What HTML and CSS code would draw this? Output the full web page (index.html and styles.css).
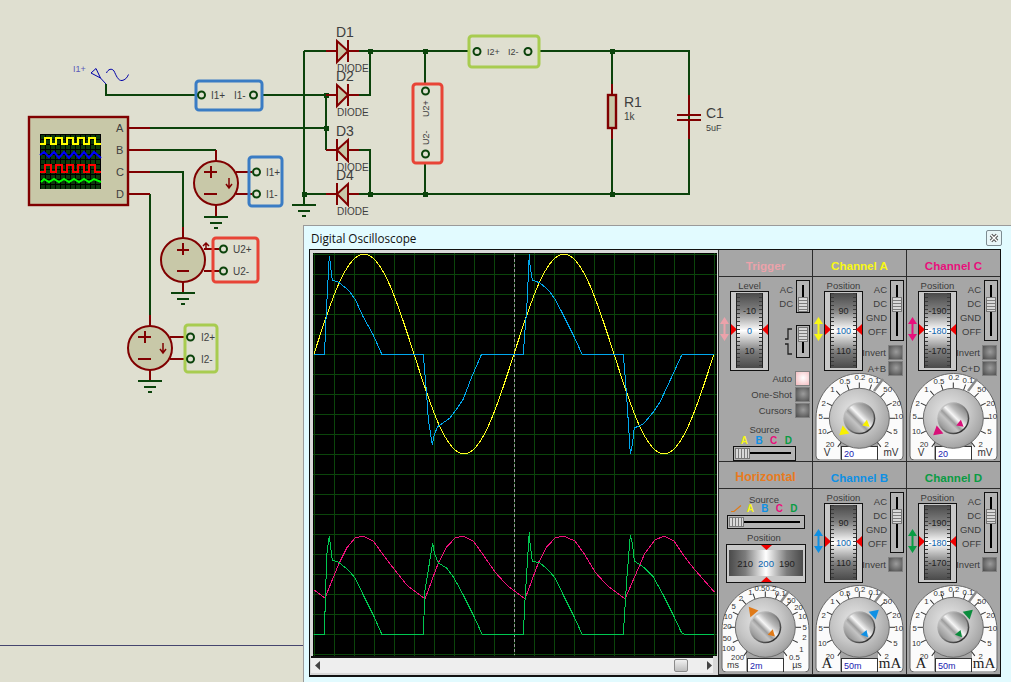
FILE: index.html
```html
<!DOCTYPE html>
<html lang="en">
<head>
<meta charset="utf-8">
<title>Digital Oscilloscope</title>
<link rel="stylesheet" href="styles.css">
</head>
<body>
<svg class="defs" width="0" height="0" aria-hidden="true">
  <defs>
    <radialGradient id="knob" cx="0.42" cy="0.4" r="0.72">
      <stop offset="0" stop-color="#e8e8e8"/><stop offset="0.5" stop-color="#c6c6c6"/><stop offset="0.8" stop-color="#a8a8a8"/><stop offset="1" stop-color="#7c7c7c"/>
    </radialGradient>
    <linearGradient id="ring" x1="0.15" y1="0.15" x2="0.85" y2="0.85">
      <stop offset="0" stop-color="#c8c8c8"/><stop offset="0.5" stop-color="#808080"/><stop offset="1" stop-color="#2e2e2e"/>
    </linearGradient>
    <linearGradient id="face" x1="0.1" y1="0.9" x2="0.9" y2="0.1">
      <stop offset="0" stop-color="#8c8c8c"/><stop offset="0.32" stop-color="#c4c4c4"/><stop offset="0.42" stop-color="#9c9c9c"/><stop offset="0.56" stop-color="#f6f6f6"/><stop offset="0.72" stop-color="#bcbcbc"/><stop offset="1" stop-color="#808080"/>
    </linearGradient>
    <pattern id="scopegrid" x="40" y="134" width="5" height="5" patternUnits="userSpaceOnUse">
      <rect width="5" height="5" fill="#0c3a0c"/><rect width="1" height="5" fill="#000"/><rect width="5" height="1" fill="#000"/>
    </pattern>
    <pattern id="screengrid" x="314" y="254" width="20" height="20" patternUnits="userSpaceOnUse">
      <rect width="1" height="20" fill="#0b450b"/><rect width="20" height="1" fill="#0b450b"/>
    </pattern>
    <symbol id="dbl-arrow" viewBox="0 0 9 24"><path d="M4.500 0L9 7H5.500V17H9L4.500 24L0 17H3.500V7H0Z"/></symbol>
    <symbol id="dial-arch" viewBox="0 0 90 88">
      <path class="arch" d="M1 84V46C1 22 20 1.500 44.500 1.500S88 22 88 46V84Q88 88 84 88H5Q1 88 1 84Z"/>
      <rect class="arch-gap" x="25" y="66" width="38" height="23"/>
      <path class="arch-split" d="M59 19L68 7"/>
      <rect class="field" x="26.500" y="74.500" width="36" height="13.500"/>
    </symbol>
    <symbol id="dial-knob" viewBox="0 0 90 88">
      <g class="ticks">
        <path d="M44.300 10.500v6"/>
        <path d="M44.300 10.500v6" transform="rotate(-20 44.300 46.300)"/>
        <path d="M44.300 10.500v6" transform="rotate(-40 44.300 46.300)"/>
        <path d="M44.300 10.500v6" transform="rotate(-65 44.300 46.300)"/>
        <path d="M44.300 10.500v6" transform="rotate(-90 44.300 46.300)"/>
        <path d="M44.300 10.500v6" transform="rotate(-115 44.300 46.300)"/>
        <path d="M44.300 10.500v6" transform="rotate(-143 44.300 46.300)"/>
        <path d="M44.300 10.500v6" transform="rotate(20 44.300 46.300)"/>
        <path d="M44.300 10.500v6" transform="rotate(45 44.300 46.300)"/>
        <path d="M44.300 10.500v6" transform="rotate(65 44.300 46.300)"/>
        <path d="M44.300 10.500v6" transform="rotate(90 44.300 46.300)"/>
        <path d="M44.300 10.500v6" transform="rotate(115 44.300 46.300)"/>
        <path d="M44.300 10.500v6" transform="rotate(143 44.300 46.300)"/>
      </g>
      <circle class="knob-rim" cx="44.300" cy="46.300" r="30"/>
      <circle class="knob-ring" cx="44.300" cy="46.300" r="16"/>
      <circle class="knob-face" cx="44.300" cy="46.300" r="14.500"/>
    </symbol>
    <symbol id="scale-ch" viewBox="0 0 90 88">
      <g class="scale">
        <text x="30" y="11.500">0.5</text><text x="45" y="8">0.2</text><text x="59" y="11">0.1</text>
        <text x="17.300" y="20">1</text><text x="8.700" y="33.500">2</text><text x="5.700" y="47">5</text><text x="7.300" y="62">10</text><text x="15" y="74.500">20</text>
        <text x="72.700" y="20">50</text><text x="81.700" y="33.500">20</text><text x="83.700" y="47">10</text><text x="80.300" y="62">5</text><text x="71.700" y="74.500">2</text>
      </g>
    </symbol>
    <symbol id="ground" viewBox="0 0 24 14" overflow="visible"><path class="gnd" d="M0 1H24M6 6.500H18M10 12H14"/></symbol>
  </defs>
</svg>

<svg class="schematic" width="1011" height="682" viewBox="0 0 1011 682">
  <path class="sheet-line" d="M0 645.500H304"/>

  <!-- wires -->
  <path class="wire" d="M106 84V95H195M262 95H326M326 95V150M128 128H326M150 150H216M150 172H183V227M150 194V315"/>
  <path class="wire" d="M304 51V204M304 51H326M304 194H326M359 51H468M370 51V95H359M359 150H370V194M359 194H689V51H539M425 51V84M425 163V194M612 51V84M612 139V194M689 51V95M689 139V194"/>
  <path class="lead" d="M128 128H150M128 150H150M128 172H150M128 194H150M216 150V161M183 227V238M150 315V326M216 205V216M183 282V292M150 370V381"/>
  <path class="lead" d="M236 172H252M236 194H252M204 249H219M204 271H219M170 337H186M170 359H186"/>
  <g class="junctions">
    <rect x="368" y="49" width="5" height="5"/><rect x="423" y="49" width="5" height="5"/><rect x="610" y="49" width="5" height="5"/>
    <rect x="324" y="93" width="5" height="5"/><rect x="324" y="126" width="5" height="5"/><rect x="302" y="192" width="5" height="5"/>
    <rect x="368" y="192" width="5" height="5"/><rect x="423" y="192" width="5" height="5"/><rect x="610" y="192" width="5" height="5"/>
  </g>

  <!-- ground symbols -->
  <use href="#ground" x="292" y="204" width="24" height="14"/>
  <use href="#ground" x="204" y="216" width="24" height="14"/>
  <use href="#ground" x="171" y="292" width="24" height="14"/>
  <use href="#ground" x="138" y="380" width="24" height="14"/>

  <!-- diodes -->
  <g class="diode"><path class="lead" d="M326 51H337M348 51H359M326 95H337M348 95H359M326 150H337M348 150H359M326 194H337M348 194H359"/>
    <path class="comp" d="M337 41L348 51L337 62ZM337 85L348 95L337 106ZM348 140L337 150L348 161ZM348 184L337 194L348 205Z"/>
    <path class="lead" d="M348 40V62M348 84V106M337 139V161M337 183V205"/>
  </g>
  <g class="lbl">
    <text class="t14" x="336" y="37">D1</text><text class="t10" x="337" y="72">DIODE</text>
    <text class="t14" x="336" y="81">D2</text><text class="t10" x="337" y="116">DIODE</text>
    <text class="t14" x="336" y="136">D3</text><text class="t10" x="337" y="171">DIODE</text>
    <text class="t14" x="336" y="180">D4</text><text class="t10" x="337" y="215">DIODE</text>
  </g>

  <!-- R1, C1 -->
  <path class="lead" d="M612 84V95M612 128V139M689 95V114M689 120V139"/>
  <rect class="comp-box" x="608" y="95" width="8" height="33"/>
  <path class="plate" d="M677 114.500H701M677 119.500H701"/>
  <g class="lbl">
    <text class="t14" x="624" y="107">R1</text><text class="t10" x="624" y="120">1k</text>
    <text class="t14" x="706" y="118">C1</text><text class="t9" x="706" y="131">5uF</text>
  </g>

  <!-- AC source probe -->
  <text class="probe-label" x="73" y="72">I1+</text>
  <path class="probe" d="M100.500 78L106 84M100.500 78L91 73L96 68.500ZM106.500 73C108 69 112 68 114 71C116 75 118 81 122 80.500C125 80 127 78 128.500 74.500"/>

  <!-- meter boxes -->
  <rect class="box blue" x="196" y="81" width="66" height="29" rx="3"/>
  <circle class="node" cx="201.500" cy="95" r="3.500"/><circle class="node" cx="253.500" cy="95" r="3.500"/>
  <g class="lbl t10"><text x="211" y="99">I1+</text><text x="234" y="99">I1-</text></g>

  <rect class="box lime" x="469" y="36" width="70" height="31" rx="3"/>
  <circle class="node" cx="477" cy="51.500" r="3.500"/><circle class="node" cx="528" cy="51.500" r="3.500"/>
  <g class="lbl t9"><text x="487" y="55">I2+</text><text x="508" y="55">I2-</text></g>

  <rect class="box red" x="413" y="84" width="29" height="79" rx="3"/>
  <circle class="node" cx="425.500" cy="91" r="3.500"/><circle class="node" cx="425.500" cy="154" r="3.500"/>
  <g class="lbl t9">
    <text transform="rotate(-90 429 117)" x="429" y="117">U2+</text>
    <text transform="rotate(-90 429 145)" x="429" y="145">U2-</text>
  </g>

  <!-- virtual scope -->
  <rect class="comp-box" x="29" y="117" width="99" height="88"/>
  <rect x="40" y="134" width="61" height="55" fill="url(#scopegrid)"/>
  <path class="sw yellow" d="M40 144H45V138H51V144H56V138H62V144H67V138H73V144H78V138H84V144H89V138H95V144H101"/>
  <path class="sw blue-w" d="M40 155L44 152L49 157L54 152L59 158L64 152L69 158L74 152L79 158L84 152L89 158L94 152L101 158"/>
  <path class="sw red-w" d="M40 172H45V165H51V172H56V165H62V172H67V165H73V172H78V165H84V172H89V165H95V172H101"/>
  <path class="sw green-w" d="M41 182L44 179L49 182L54 179L59 182L64 179L69 182L74 179L79 182L84 179L89 182L94 179L101 182"/>
  <g class="lbl t11">
    <text x="116" y="132">A</text><text x="116" y="154">B</text><text x="116" y="176">C</text><text x="116" y="198">D</text>
  </g>

  <!-- source 1 -->
  <circle class="comp-c" cx="216" cy="183" r="22"/>
  <path class="sym" d="M204 172H217M210.500 166V178M204 194H217"/>
  <path class="sym-thin" d="M229 178V187M226 184L229 188L232 184"/>
  <rect class="box blue" x="249" y="157" width="33" height="49" rx="3"/>
  <circle class="node" cx="256.500" cy="172" r="3.500"/><circle class="node" cx="256.500" cy="194" r="3.500"/>
  <g class="lbl t10"><text x="266" y="176">I1+</text><text x="266" y="198">I1-</text></g>

  <!-- source 2 -->
  <circle class="comp-c" cx="183" cy="260" r="22"/>
  <path class="sym" d="M177 249.500H189M183 243V255M177 271H189"/>
  <path class="sym-thin" d="M206 250V243M203 246L206 243L209 246"/>
  <rect class="box red" x="213" y="238" width="45" height="44" rx="3"/>
  <circle class="node" cx="223.500" cy="249" r="3.500"/><circle class="node" cx="223.500" cy="271" r="3.500"/>
  <g class="lbl t10"><text x="233" y="253">U2+</text><text x="233" y="275">U2-</text></g>

  <!-- source 3 -->
  <circle class="comp-c" cx="150" cy="348" r="22"/>
  <path class="sym" d="M138 337H151M144.500 331V343M138 359H151"/>
  <path class="sym-thin" d="M163 343V352M160 349L163 353L166 349"/>
  <rect class="box lime" x="185" y="325" width="32" height="47" rx="3"/>
  <circle class="node" cx="190.500" cy="337" r="3.500"/><circle class="node" cx="190.500" cy="359" r="3.500"/>
  <g class="lbl t10"><text x="201" y="341">I2+</text><text x="201" y="363">I2-</text></g>
</svg>

<div class="window">
  <header class="titlebar">
    <span class="title">Digital Oscilloscope</span>
    <button class="close" type="button" aria-label="Close"><svg width="12" height="12" viewBox="0 0 12 12"><path class="close-o" d="M3 3L9 9M9 3L3 9"/><path class="close-x" d="M3 3L9 9M9 3L3 9"/></svg></button>
  </header>
  <div class="win-body">
    <div class="scope">
      <svg class="screen" width="404" height="403" viewBox="313 253 404 403">
        <rect x="313" y="253" width="404" height="403" fill="#000"/>
        <rect x="313" y="253" width="404" height="403" fill="url(#screengrid)"/>
        <path class="center-dash" d="M514.500 254V655"/>
        <path class="tr tr-y" d="M314 354c16.300-51.200 31.900-100 50-100c18.100 0 33.700 48.800 50 100c16.300 51.200 31.900 100 50 100c18.100 0 33.700-48.800 50-100c16.300-51.200 31.900-100 50-100c18.100 0 33.700 48.800 50 100c16.300 51.200 31.900 100 50 100c18.100 0 33.700-48.800 50-100"/>
        <polyline class="tr tr-b" points="314,354 324.500,354 326,319 326.700,305 329.300,256 330,261 330.700,267 332.300,280 338.300,282 348.300,290 355,299 363.300,317 373.300,335 381.700,354 423.300,354 425,375 426.700,395 428.300,419 432.300,445 434.300,435 437.300,427 440,425 450,418 456.700,409 463.300,399 471.700,377 481.700,354 523.300,354 525,330 526.700,310 529.300,254 530,265 532.300,280 540,283 548.300,290 555,299 563.300,315 573.300,335 582,354 623.300,354 625,375 626.700,397 628.300,422 630.300,454 632.300,445 634.300,428 643.300,424 653.300,412 660,402 671.700,377 681.700,355 684,354 714.300,354"/>
        <polyline class="tr tr-p" points="314.300,590 325,598 338.300,565 346.700,548 355,538 363.300,536 373.300,541 383.300,555 393.300,568 406.700,585 425,599 438.300,563 446.700,547 455,538 463.300,536 473.300,541 483.300,555 495,572 506.700,585 525,599 538.300,563 546.700,547 555,538 563.300,536 575,541 585,555 595,572 606.700,585 625,599 645,553 655,540 664,536 674,541 683.300,555 693.300,568 714.300,592"/>
        <polyline class="tr tr-g" points="314,634 324.300,634 325.700,590 326.700,555 329.300,536 330.700,547 332.300,560 338.300,562 348.300,570 355,578 363.300,595 373.300,615 381.700,634 423.300,634 425,590 432.700,543 434.300,553 438.300,563 446.700,568 454,578 463.300,595 473.300,615 482,634 523.300,634 525,600 529.300,532 530,543 532.300,561 540,563 548.300,570 555,578 563.300,595 573.300,615 582,634 623.300,634 625,607 626.700,580 630.300,535 632.300,543 634.300,561 643.300,567 653.300,577 663.300,595 673.300,615 681.700,633 684,634 714.300,634"/>
      </svg>
      <div class="scrollbar">
        <svg class="sb-arrow" width="15" height="15" viewBox="0 0 15 15"><path d="M9 3V12L4 7.500Z"/></svg>
        <span class="sb-track"></span>
        <span class="sb-thumb"></span>
        <svg class="sb-arrow" width="9" height="15" viewBox="0 0 9 15"><path d="M3 3V12L8 7.500Z"/></svg>
      </div>
    </div>

    <div class="controls">
      <!-- Trigger -->
      <section class="cell">
        <h2 class="cell-title c-trigger">Trigger</h2>
        <div class="cell-body">
          <div class="ctrl-row trig-row">
            <svg class="dbl c-trigger"><use href="#dbl-arrow"/></svg>
            <div class="pos-col">
              <div class="cap">Level</div>
              <div class="tape"><div class="face"><span>-10</span><span class="mid">0</span><span>10</span></div></div>
            </div>
            <div class="side">
              <div class="side-top">
                <ul class="modes"><li>AC</li><li>DC</li></ul>
                <div class="vslider short"><span class="thumb low"></span></div>
              </div>
              <div class="side-top polarity">
                <svg class="edge" width="9" height="27" viewBox="0 0 9 27"><path d="M1 11H4V1H8M8 26H4V16H1"/></svg>
                <div class="vslider short"><span class="thumb high"></span></div>
              </div>
            </div>
          </div>
          <div class="btn-row"><span>Auto</span><span class="btn on"></span></div>
          <div class="btn-row"><span>One-Shot</span><span class="btn"></span></div>
          <div class="btn-row"><span>Cursors</span><span class="btn"></span></div>
          <div class="cap src-cap">Source</div>
          <div class="letters trig-letters"><span class="c-a">A</span><span class="c-b">B</span><span class="c-c">C</span><span class="c-d">D</span></div>
          <div class="hslider trig-slider"><span class="hthumb"></span></div>
        </div>
      </section>

      <!-- Channel A -->
      <section class="cell">
        <h2 class="cell-title c-a">Channel A</h2>
        <div class="cell-body">
          <div class="ctrl-row">
            <svg class="dbl c-a"><use href="#dbl-arrow"/></svg>
            <div class="pos-col">
              <div class="cap">Position</div>
              <div class="tape"><div class="face"><span>90</span><span class="mid">100</span><span>110</span></div></div>
            </div>
            <div class="side">
              <div class="side-top">
                <ul class="modes"><li>AC</li><li>DC</li><li>GND</li><li>OFF</li></ul>
                <div class="vslider"><span class="thumb"></span></div>
              </div>
              <div class="btn-row side-btn"><span>Invert</span><span class="btn"></span></div>
              <div class="btn-row side-btn"><span>A+B</span><span class="btn"></span></div>
            </div>
          </div>
          <svg class="dial" width="90" height="88" viewBox="0 0 90 88">
            <use href="#dial-arch"/><use href="#dial-knob"/><use href="#scale-ch"/>
            <path class="fill-a" transform="rotate(230 44.300 46.300)" d="M44.300 20L49.500 29H39.100Z"/>
            <path class="fill-a" transform="rotate(129 44.300 46.300)" d="M44.300 33L48 39.500H40.600Z"/>
            <text class="unit" x="12" y="84">V</text><text class="val" x="29" y="85">20</text><text class="unit" x="76" y="84">mV</text>
          </svg>
        </div>
      </section>

      <!-- Channel C -->
      <section class="cell">
        <h2 class="cell-title c-c">Channel C</h2>
        <div class="cell-body">
          <div class="ctrl-row">
            <svg class="dbl c-c"><use href="#dbl-arrow"/></svg>
            <div class="pos-col">
              <div class="cap">Position</div>
              <div class="tape"><div class="face"><span>-190</span><span class="mid">-180</span><span>-170</span></div></div>
            </div>
            <div class="side">
              <div class="side-top">
                <ul class="modes"><li>AC</li><li>DC</li><li>GND</li><li>OFF</li></ul>
                <div class="vslider"><span class="thumb"></span></div>
              </div>
              <div class="btn-row side-btn"><span>Invert</span><span class="btn"></span></div>
              <div class="btn-row side-btn"><span>C+D</span><span class="btn"></span></div>
            </div>
          </div>
          <svg class="dial" width="90" height="88" viewBox="0 0 90 88">
            <use href="#dial-arch"/><use href="#dial-knob"/><use href="#scale-ch"/>
            <path class="fill-c" transform="rotate(230 44.300 46.300)" d="M44.300 20L49.500 29H39.100Z"/>
            <path class="fill-c" transform="rotate(129 44.300 46.300)" d="M44.300 33L48 39.500H40.600Z"/>
            <text class="unit" x="12" y="84">V</text><text class="val" x="29" y="85">20</text><text class="unit" x="76" y="84">mV</text>
          </svg>
        </div>
      </section>

      <!-- Horizontal -->
      <section class="cell">
        <h2 class="cell-title c-h">Horizontal</h2>
        <div class="cell-body h-body">
          <div class="cap src-h">Source</div>
          <div class="letters h-letters">
            <svg class="ramp" width="12" height="10" viewBox="0 0 12 10"><path d="M0 8.500H3L10 2.500"/></svg>
            <span class="c-a">A</span><span class="c-b">B</span><span class="c-c">C</span><span class="c-d">D</span>
          </div>
          <div class="hslider h-slider"><span class="hthumb"></span></div>
          <div class="cap pos-h">Position</div>
          <div class="htape">
            <div class="hface"><span>210</span><span class="mid">200</span><span>190</span></div>
          </div>
          <svg class="dial dial-h" width="90" height="88" viewBox="0 0 90 88">
            <use href="#dial-arch"/>
            <g transform="translate(0 -3)"><use href="#dial-knob"/></g>
            <g class="scale">
              <text x="39" y="7.400">0.5</text><text x="50" y="6.700">0.2</text><text x="59.300" y="11.700">0.1</text>
              <text x="29.300" y="10.700">1</text><text x="20" y="16.700">2</text><text x="12.600" y="25">5</text><text x="7" y="35">10</text><text x="6.300" y="45">20</text><text x="6" y="56.700">50</text><text x="7.600" y="66.700">100</text><text x="16.600" y="76">200</text>
              <text x="70.300" y="19">50</text><text x="77.600" y="25.700">20</text><text x="81.600" y="35">10</text><text x="83.600" y="45.700">5</text><text x="83.300" y="56">2</text><text x="80.300" y="68.400">1</text><text x="73.300" y="76">0.5</text>
            </g>
            <g transform="translate(0 -3)">
              <path class="fill-h" transform="rotate(321 44.300 46.300)" d="M44.300 20L49.500 29H39.100Z"/>
              <path class="fill-h" transform="rotate(134 44.300 46.300)" d="M44.300 33L48 39.500H40.600Z"/>
            </g>
            <text class="unit small" x="12" y="84">ms</text><text class="val" x="29" y="85">2m</text><text class="unit small" x="76" y="84">µs</text>
          </svg>
        </div>
      </section>

      <!-- Channel B -->
      <section class="cell">
        <h2 class="cell-title c-b">Channel B</h2>
        <div class="cell-body">
          <div class="ctrl-row">
            <svg class="dbl c-b"><use href="#dbl-arrow"/></svg>
            <div class="pos-col">
              <div class="cap">Position</div>
              <div class="tape"><div class="face"><span>90</span><span class="mid">100</span><span>110</span></div></div>
            </div>
            <div class="side">
              <div class="side-top">
                <ul class="modes"><li>AC</li><li>DC</li><li>GND</li><li>OFF</li></ul>
                <div class="vslider"><span class="thumb"></span></div>
              </div>
              <div class="btn-row side-btn"><span>Invert</span><span class="btn"></span></div>
            </div>
          </div>
          <svg class="dial" width="90" height="88" viewBox="0 0 90 88">
            <use href="#dial-arch"/>
            <g transform="translate(0 -3)"><use href="#dial-knob"/></g>
            <use href="#scale-ch"/>
            <g transform="translate(0 -3)">
              <path class="fill-b" transform="rotate(48 44.300 46.300)" d="M44.300 20L49.500 29H39.100Z"/>
              <path class="fill-b" transform="rotate(139 44.300 46.300)" d="M44.300 33L48 39.500H40.600Z"/>
            </g>
            <text class="unit serif" x="12" y="84">A</text><text class="val" x="29" y="85">50m</text><text class="unit serif" x="75" y="84">mA</text>
          </svg>
        </div>
      </section>

      <!-- Channel D -->
      <section class="cell">
        <h2 class="cell-title c-d">Channel D</h2>
        <div class="cell-body">
          <div class="ctrl-row">
            <svg class="dbl c-d"><use href="#dbl-arrow"/></svg>
            <div class="pos-col">
              <div class="cap">Position</div>
              <div class="tape"><div class="face"><span>-190</span><span class="mid">-180</span><span>-170</span></div></div>
            </div>
            <div class="side">
              <div class="side-top">
                <ul class="modes"><li>AC</li><li>DC</li><li>GND</li><li>OFF</li></ul>
                <div class="vslider"><span class="thumb"></span></div>
              </div>
              <div class="btn-row side-btn"><span>Invert</span><span class="btn"></span></div>
            </div>
          </div>
          <svg class="dial" width="90" height="88" viewBox="0 0 90 88">
            <use href="#dial-arch"/>
            <g transform="translate(0 -3)"><use href="#dial-knob"/></g>
            <use href="#scale-ch"/>
            <g transform="translate(0 -3)">
              <path class="fill-d" transform="rotate(48 44.300 46.300)" d="M44.300 20L49.500 29H39.100Z"/>
              <path class="fill-d" transform="rotate(139 44.300 46.300)" d="M44.300 33L48 39.500H40.600Z"/>
            </g>
            <text class="unit serif" x="12" y="84">A</text><text class="val" x="29" y="85">50m</text><text class="unit serif" x="75" y="84">mA</text>
          </svg>
        </div>
      </section>
    </div>
  </div>
</div>
</body>
</html>
```
FILE: styles.css
```css
* { box-sizing: border-box; }
html, body { margin: 0; padding: 0; }
body {
  position: relative;
  width: 1011px;
  height: 682px;
  overflow: hidden;
  background: #dfdfd0;
  font-family: "Liberation Sans", Arial, sans-serif;
}
.defs { position: absolute; }
.schematic { display: block; }

/* schematic */
.sheet-line { stroke: #45456e; stroke-width: 1; fill: none; }
.wire { stroke: #0b430b; stroke-width: 2; fill: none; shape-rendering: crispEdges; }
.lead { stroke: #800000; stroke-width: 2; fill: none; shape-rendering: crispEdges; }
.junctions rect { fill: #0b430b; }
.gnd { stroke: #0b430b; stroke-width: 2; fill: none; shape-rendering: crispEdges; }
.comp { fill: #c8c8a8; stroke: #800000; stroke-width: 2; }
.comp-box { fill: #c8c8a8; stroke: #800000; stroke-width: 2.400; }
.comp-c { fill: #c8c8a8; stroke: #800000; stroke-width: 2; }
.plate { stroke: #800000; stroke-width: 2; fill: none; shape-rendering: crispEdges; }
.sym { stroke: #800000; stroke-width: 2; fill: none; shape-rendering: crispEdges; }
.sym-thin { stroke: #800000; stroke-width: 1.500; fill: none; }
.node { fill: none; stroke: #0b430b; stroke-width: 2; }
.box { fill: none; stroke-width: 3; }
.box.blue { stroke: #3a7cc4; }
.box.lime { stroke: #a8cc50; }
.box.red { stroke: #e84436; }
.lbl text, .lbl { fill: #3e3e3e; }
.t14 { font-size: 14px; }
.t11 { font-size: 11px; }
.t10, .t10 text { font-size: 10px; }
.t9, .t9 text { font-size: 9px; }
.probe-label { font-size: 9px; fill: #5a5ab8; }
.probe { fill: none; stroke: #0000a8; stroke-width: 1; }
.sw { fill: none; stroke-width: 2; }
.yellow { stroke: #ffff00; }
.blue-w { stroke: #0000ff; }
.red-w { stroke: #ff0000; }
.green-w { stroke: #00ff00; }

/* window */
.window {
  position: absolute;
  left: 303px;
  top: 225px;
  width: 708px;
  height: 457px;
  display: flex;
  flex-direction: column;
  background: #e2fbff;
  border-top: 1px solid #9a9a9a;
  border-left: 1px solid #9a9a9a;
}
.titlebar {
  height: 23px;
  display: flex;
  align-items: center;
  justify-content: space-between;
  padding: 0 9px 0 7px;
  flex: none;
}
.title { font: 11.700px "Open Sans", sans-serif; color: #111; }
.close {
  width: 16px;
  height: 16px;
  padding: 0;
  display: flex;
  align-items: center;
  justify-content: center;
  background: #e8f6f8;
  border: 1px solid #7d8c92;
  border-radius: 2px;
}
.close-o { stroke: #555; stroke-width: 3.500; fill: none; }
.close-x { stroke: #fff; stroke-width: 1.400; fill: none; }
.win-body {
  margin-left: 5px;
  width: 692px;
  height: 428px;
  display: flex;
  flex: none;
  background: #a4a4a4;
  border: 1px solid #111;
  border-bottom-width: 2px;
}
.scope {
  width: 408px;
  flex: none;
  background: #d8d8d8;
  display: flex;
  flex-direction: column;
  padding: 3px 0 0 3px;
}
.screen { display: block; flex: none; }
.center-dash { stroke: #9a9a9a; stroke-width: 1; stroke-dasharray: 3 2; fill: none; shape-rendering: crispEdges; }
.tr { fill: none; stroke-width: 1; shape-rendering: crispEdges; }
.tr-y { stroke: #ffff20; }
.tr-b { stroke: #00a8ee; }
.tr-p { stroke: #f0107c; }
.tr-g { stroke: #00c850; }

.scrollbar {
  height: 17px;
  margin: 0 5px 0 -2px;
  display: flex;
  align-items: center;
  border-top: 2px solid #111;
  background: #eeeeee;
  flex: none;
}
.sb-arrow path { fill: #444; }
.sb-track { flex: 1; }
.sb-thumb {
  width: 14px;
  height: 13px;
  margin-right: 16px;
  background: linear-gradient(#f0f0f0, #bdbdbd);
  border: 1px solid #8a8a8a;
  border-radius: 2px;
}

/* control panels */
.controls {
  flex: 1;
  display: grid;
  grid-template-columns: 94px 94px 94px;
  grid-template-rows: 212px 213px;
  background: #a4a4a4;
}
.cell {
  display: flex;
  flex-direction: column;
  border-left: 1px solid #2c2c2c;
  border-bottom: 1px solid #2c2c2c;
  background: #a6a6a6;
}
.cell-title {
  margin: 0;
  height: 27px;
  flex: none;
  display: flex;
  align-items: center;
  justify-content: center;
  padding-top: 4px;
  font-size: 11.600px;
  font-weight: bold;
  border-bottom: 1px solid #2c2c2c;
}
.c-trigger { color: #eba2aa; fill: #eba2aa; }
.c-a { color: #f8f814; fill: #f8f814; }
.c-b { color: #0f90e4; fill: #0f90e4; }
.c-c { color: #e8107c; fill: #e8107c; }
.c-d { color: #0a9c44; fill: #0a9c44; }
.c-h { color: #e87a20; font-size: 12.400px; }
.fill-a { fill: #f8f000; }
.fill-b { fill: #0f90e4; }
.fill-c { fill: #d81078; }
.fill-d { fill: #0a8c3c; }
.fill-h { fill: #e07a18; }

.cell-body { flex: 1; padding-top: 3px; min-height: 0; }
.ctrl-row { display: flex; height: 92px; align-items: flex-start; }
.ctrl-row.trig-row { height: 91px; }
.dbl { width: 9px; height: 24px; margin: 37px 1px 0 1px; flex: none; }
.pos-col { width: 39px; flex: none; }
.cap {
  height: 11px;
  line-height: 11px;
  font-size: 9.500px;
  color: #3c3c3c;
  text-align: center;
}
.tape {
  position: relative;
  width: 39px;
  height: 80px;
  padding: 1px 5px 2px;
  background: #c8c8c8;
  border: 1px solid #111;
}
.tape::before, .tape::after {
  content: "";
  position: absolute;
  top: 32px;
  width: 6px;
  height: 11px;
  background: #f00000;
}
.tape::before { left: 0; clip-path: polygon(0 0, 100% 50%, 0 100%); }
.tape::after { right: 0; clip-path: polygon(100% 0, 0 50%, 100% 100%); }
.face {
  position: relative;
  height: 100%;
  display: flex;
  flex-direction: column;
  align-items: center;
  justify-content: center;
  background: linear-gradient(#4a4a4a, #7c7c7c 22%, #ffffff 50%, #7c7c7c 78%, #4a4a4a);
  border-left: 1px solid #222;
  border-right: 1px solid #222;
  font-size: 9px;
  color: #222;
}
.face::before, .face::after {
  content: "";
  position: absolute;
  top: 0;
  bottom: 0;
  width: 3px;
  background: repeating-linear-gradient(#3a3a3a 0 1px, transparent 1px 4px);
}
.face::before { left: 0; }
.face::after { right: 0; }
.face span { height: 20px; line-height: 20px; }
.mid { color: #0c66b0; }
.side { width: 41px; flex: none; }
.side-top { display: flex; justify-content: flex-end; gap: 3px; }
.modes {
  margin: 0;
  padding: 3px 0 0;
  list-style: none;
  text-align: right;
  font-size: 9.500px;
  color: #3c3c3c;
}
.modes li { height: 14px; line-height: 14px; }
.vslider {
  position: relative;
  width: 14px;
  height: 61px;
  flex: none;
  background: #b4b4b4;
  border: 1px solid #111;
}
.vslider::before {
  content: "";
  position: absolute;
  left: 5px;
  top: 4px;
  bottom: 4px;
  width: 2px;
  background: #000;
}
.vslider.short { height: 33px; }
.thumb {
  position: absolute;
  left: 1px;
  top: 16px;
  width: 10px;
  height: 15px;
  background: repeating-linear-gradient(#d8d8d8 0 2px, #7c7c7c 2px 3px);
  border: 1px solid #777;
}
.thumb.low { top: 16px; }
.thumb.high { top: 1px; }
.polarity { margin-top: 12px; align-items: center; gap: 3px; }
.edge path { fill: none; stroke: #222; stroke-width: 1.300; }
.btn-row {
  height: 15px;
  margin-bottom: 1px;
  padding-right: 2px;
  display: flex;
  justify-content: flex-end;
  align-items: center;
  gap: 3px;
  font-size: 9.500px;
  color: #3c3c3c;
}
.side-btn { gap: 2px; padding-right: 1px; }
.side-top + .side-btn { margin-top: 4px; }
.btn {
  width: 15px;
  height: 15px;
  flex: none;
  background: radial-gradient(circle at 55% 45%, #9c9c9c, #4a4a4a);
  border: 1px solid #808080;
}
.btn.on { background: radial-gradient(circle at 55% 45%, #ffffff, #f4b8bc); }
.src-cap { margin: 5.500px 0 0 -2px; }
.letters { display: flex; font-size: 10px; font-weight: bold; line-height: 11px; }
.letters span { width: 14.700px; text-align: center; }
.trig-letters { margin-left: 18px; }
.hslider {
  position: relative;
  height: 15px;
  background: #b4b4b4;
  border: 1px solid #111;
}
.hslider::before {
  content: "";
  position: absolute;
  left: 4px;
  right: 4px;
  top: 5px;
  height: 2px;
  background: #000;
}
.hthumb {
  position: absolute;
  left: 1px;
  top: 1px;
  width: 15px;
  height: 11px;
  background: repeating-linear-gradient(90deg, #d8d8d8 0 2px, #7c7c7c 2px 3px);
  border: 1px solid #777;
}
.trig-slider { width: 63px; margin: 0 0 0 14px; }
.h-body { padding-top: 5px; }
.src-h { width: 90px; }
.h-letters { margin: -2px 0 0 12px; height: 11px; }
.h-letters span { width: 14.500px; }
.ramp { flex: none; }
.ramp path { fill: none; stroke: #e07a18; stroke-width: 1.200; }
.h-slider { width: 78px; height: 14px; margin: 1px 0 0 8px; }
.h-slider .hthumb { height: 10px; }
.pos-h { width: 90px; margin-top: 3px; }
.htape {
  position: relative;
  width: 80px;
  height: 39px;
  margin: 1px 0 0 7px;
  padding: 5px 2px 6px;
  background: #c8c8c8;
  border: 1px solid #111;
}
.htape::before, .htape::after {
  content: "";
  position: absolute;
  left: 34px;
  width: 11px;
  height: 5px;
  background: #f00000;
}
.htape::before { top: 0; clip-path: polygon(0 0, 100% 0, 50% 100%); }
.htape::after { bottom: 0; clip-path: polygon(50% 0, 100% 100%, 0 100%); }
.hface {
  height: 100%;
  display: flex;
  align-items: center;
  justify-content: center;
  gap: 5px;
  font-size: 9.500px;
  color: #222;
  background: linear-gradient(90deg, #4a4a4a, #7c7c7c 22%, #ffffff 50%, #7c7c7c 78%, #4a4a4a);
}

/* dials */
.dial { display: block; margin-left: 2px; }
.dial-h { margin: 1px 0 0 2px; }
.arch { fill: #fbfbfb; stroke: #666; stroke-width: 1; }
.arch-gap { fill: #a6a6a6; }
.arch-split { stroke: #8a8a8a; stroke-width: 2.500; fill: none; }
.ticks path { stroke: #333; stroke-width: 1; fill: none; }
.knob-rim { fill: url(#knob); stroke: #6c6c6c; stroke-width: 1; }
.knob-ring { fill: url(#ring); }
.knob-face { fill: url(#face); }
.field { fill: #fff; stroke: #333; stroke-width: 1; }
.scale text { font-size: 7.800px; fill: #333; text-anchor: middle; }
.unit { font-size: 10px; fill: #333; text-anchor: middle; }
.unit.small { font-size: 9px; }
.unit.serif { font-family: "Liberation Serif", serif; font-size: 15px; fill: #222; }
.val { font-size: 9px; fill: #1a1ab0; }
```
